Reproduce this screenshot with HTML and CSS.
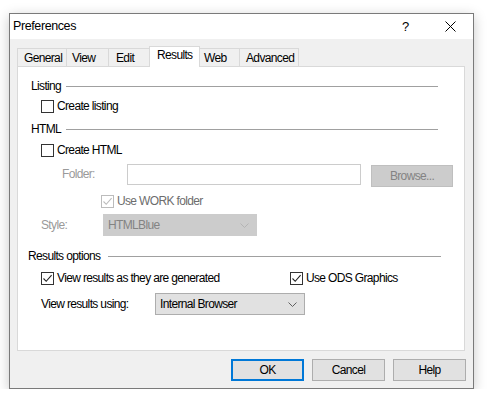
FILE: index.html
```html
<!DOCTYPE html>
<html>
<head>
<meta charset="utf-8">
<link rel="stylesheet" href="styles.css">
</head>
<body>
<div class="window">
  <div class="titlebar">
    <div class="title">Preferences</div>
    <div class="tbtn help-btn">?</div>
    <div class="tbtn close-btn">
      <svg width="11" height="11" viewBox="0 0 11 11"><path d="M0.5 0.5 L10.5 10.5 M10.5 0.5 L0.5 10.5" stroke="#000" stroke-width="1" fill="none"/></svg>
    </div>
  </div>
  <div class="client">
    <div class="tabs">
      <div class="tab t-general">General</div>
      <div class="tab t-view">View</div>
      <div class="tab t-edit">Edit</div>
      <div class="tab t-results active">Results</div>
      <div class="tab t-web">Web</div>
      <div class="tab t-adv">Advanced</div>
    </div>
    <div class="panel">
      <div class="group-head g-listing"><span>Listing</span><div class="rule"></div></div>
      <div class="row r-listing">
        <label class="check"><span class="box"></span><span>Create listing</span></label>
      </div>
      <div class="group-head g-html"><span>HTML</span><div class="rule"></div></div>
      <div class="row r-html">
        <label class="check"><span class="box"></span><span>Create HTML</span></label>
      </div>
      <div class="row r-folder">
        <span class="dis-label folder-label">Folder:</span>
        <div class="textbox"></div>
        <div class="btn-dis">Browse...</div>
      </div>
      <div class="row r-work">
        <label class="check disabled"><span class="box"><svg width="11" height="11" viewBox="0 0 11 11"><path d="M1.5 5.5 L4.2 8.3 L9.6 2.2" stroke="#bcbcbc" stroke-width="1.1" fill="none"/></svg></span><span>Use WORK folder</span></label>
      </div>
      <div class="row r-style">
        <span class="dis-label style-label">Style:</span>
        <div class="select disabled"><span>HTMLBlue</span>
          <svg width="9" height="5" viewBox="0 0 9 5"><path d="M0.5 0.5 L4.5 4.5 L8.5 0.5" stroke="#b4b4b4" stroke-width="1" fill="none"/></svg>
        </div>
      </div>
      <div class="group-head g-results"><span>Results options</span><div class="rule"></div></div>
      <div class="row r-view">
        <label class="check c-view"><span class="box"><svg width="11" height="11" viewBox="0 0 11 11"><path d="M1.5 5.5 L4.2 8.3 L9.6 2.2" stroke="#222" stroke-width="1.1" fill="none"/></svg></span><span>View results as they are generated</span></label>
        <label class="check"><span class="box"><svg width="11" height="11" viewBox="0 0 11 11"><path d="M1.5 5.5 L4.2 8.3 L9.6 2.2" stroke="#222" stroke-width="1.1" fill="none"/></svg></span><span>Use ODS Graphics</span></label>
      </div>
      <div class="row r-using">
        <span class="using-label">View results using:</span>
        <div class="select enabled"><span>Internal Browser</span>
          <svg width="9" height="5" viewBox="0 0 9 5"><path d="M0.5 0.5 L4.5 4.5 L8.5 0.5" stroke="#606060" stroke-width="1" fill="none"/></svg>
        </div>
      </div>
    </div>
    <div class="buttons">
      <div class="btn default">OK</div>
      <div class="btn">Cancel</div>
      <div class="btn">Help</div>
    </div>
  </div>
</div>
</body>
</html>
```
FILE: styles.css
```css
* { box-sizing: border-box; }
html, body { margin: 0; padding: 0; background: #ffffff; }
body {
  font-family: "Liberation Sans", Arial, sans-serif;
  font-size: 12px;
  letter-spacing: -0.65px;
  color: #000;
}
.window {
  margin: 13px 0 0 9px;
  width: 465px;
  height: 376px;
  border: 1px solid #7a7a7a;
  background: #f0f0f0;
  box-shadow: 0 3px 12px rgba(0,0,0,0.22);
  display: flex;
  flex-direction: column;
}
.titlebar {
  height: 25px;
  background: #fff;
  display: flex;
  align-items: center;
}
.title {
  flex: 1;
  padding-left: 3px;
  font-size: 12.5px;
  letter-spacing: -0.4px;
  padding-bottom: 1px;
}
.tbtn {
  width: 45px;
  height: 25px;
  display: flex;
  align-items: center;
  justify-content: center;
}
.help-btn { font-size: 13px; letter-spacing: 0; padding-bottom: 1px; }
.client {
  flex: 1;
  display: flex;
  flex-direction: column;
  padding: 7px 7px 7px 7px;
}
.tabs {
  height: 20px;
  display: flex;
  align-items: flex-end;
  position: relative;
  z-index: 2;
}
.tab {
  height: 18px;
  border: 1px solid #d9d9d9;
  border-bottom: none;
  background: #f0f0f0;
  padding-left: 5px;
  line-height: 18px;
  margin-left: -1px;
  white-space: nowrap;
}
.tab.t-general { margin-left: 0; width: 50px; padding-left: 6px; }
.tab.t-view { width: 43px; }
.tab.t-edit { width: 42px; padding-left: 7px; }
.tab.t-results { width: 51px; }
.tab.t-web { width: 41px; padding-left: 4px; }
.tab.t-adv { width: 60px; padding-left: 6px; }
.tab.active {
  height: 21px;
  margin-bottom: -1px;
  background: #fff;
  line-height: 17px;
  padding-left: 7px;
  position: relative;
}
.panel {
  width: 448px;
  height: 285px;
  margin-left: 0;
  background: #fff;
  border: 1px solid #d9d9d9;
  display: flex;
  flex-direction: column;
}
.group-head {
  height: 18px;
  display: flex;
  align-items: center;
  padding-left: 13px;
  padding-right: 26px;
}
.group-head .rule {
  flex: 1;
  height: 1px;
  background: #a0a0a0;
  margin-left: 5px;
}
.g-listing { margin-top: 10px; }
.g-html { margin-top: 5px; }
.g-results { margin-top: 11px; padding-left: 10px; padding-right: 23px; }
.g-results .rule { margin-left: 8px; }
.row {
  display: flex;
  align-items: center;
  padding-left: 23px;
}
.r-listing { height: 18px; margin-top: 2px; }
.r-html { height: 18px; margin-top: 3px; }
.r-folder { height: 22px; margin-top: 5px; padding-left: 44px; align-items: flex-start; }
.r-work { height: 18px; margin-top: 6px; padding-left: 83px; }
.r-style { height: 22px; margin-top: 4px; }
.r-view { height: 18px; margin-top: 4px; }
.r-using { height: 22px; margin-top: 6px; }
.check {
  display: flex;
  align-items: center;
  white-space: nowrap;
}
.check .box {
  width: 13px;
  height: 13px;
  border: 1px solid #333;
  background: #fff;
  margin-right: 3px;
  display: flex;
  align-items: center;
  justify-content: center;
}
.check.disabled { color: #6d6d6d; }
.check.disabled .box { border-color: #bcbcbc; }
.c-view { width: 249px; }
.dis-label { color: #9a9a9a; }
.folder-label { width: 65px; line-height: 21px; }
.style-label { width: 62px; }
.textbox {
  width: 234px;
  height: 21px;
  border: 1px solid #cccccc;
  background: #fff;
}
.btn-dis {
  width: 82px;
  height: 22px;
  margin-left: 10px;
  margin-top: 1px;
  background: #cccccc;
  border: 1px solid #bfbfbf;
  color: #838383;
  display: flex;
  align-items: center;
  justify-content: center;
}
.select {
  height: 22px;
  display: flex;
  align-items: center;
  justify-content: space-between;
  padding: 0 7px 0 4px;
}
.select.disabled {
  width: 154px;
  background: #cccccc;
  border: 1px solid #cccccc;
  color: #838383;
}
.select.enabled {
  width: 150px;
  background: #e1e1e1;
  border: 1px solid #adadad;
}
.using-label { width: 114px; }
.buttons {
  margin-top: 8px;
  display: flex;
  justify-content: flex-end;
  gap: 8px;
}
.btn {
  width: 73px;
  height: 22px;
  background: #e1e1e1;
  border: 1px solid #adadad;
  display: flex;
  align-items: center;
  justify-content: center;
}
.btn.default { border: 2px solid #0078d7; }
```
